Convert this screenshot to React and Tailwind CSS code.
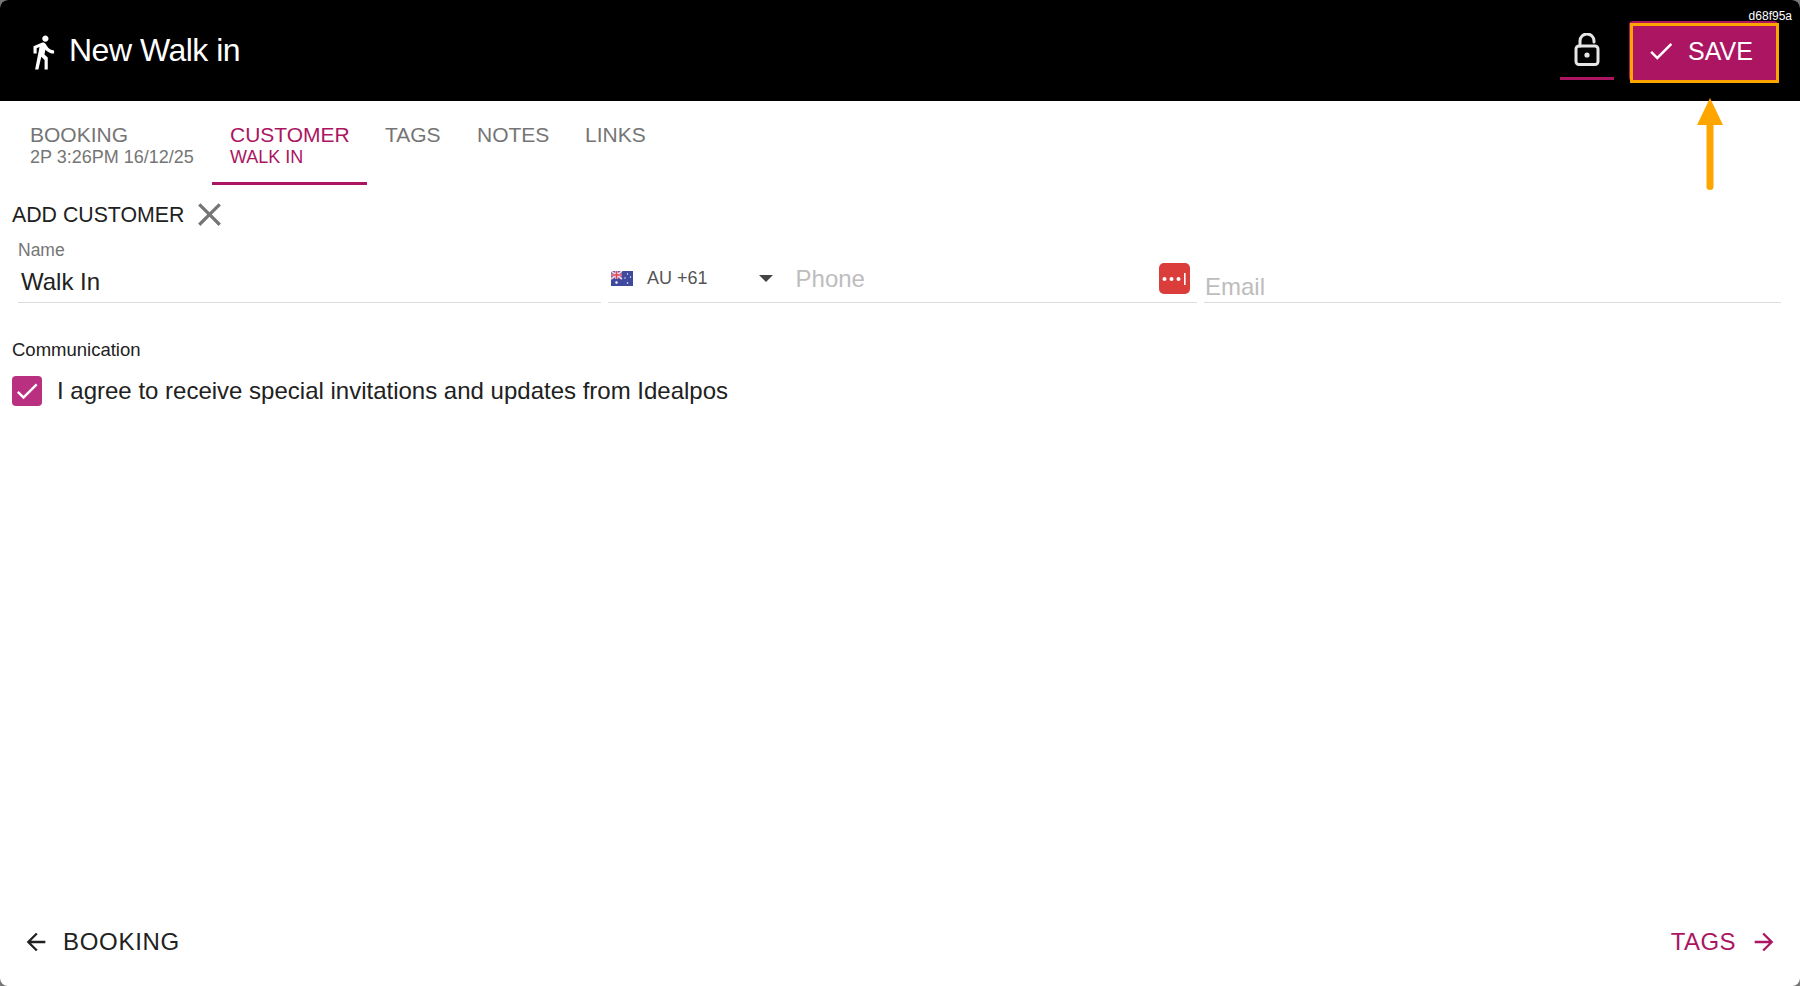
import { MdDirectionsWalk, MdClose, MdCheck, MdArrowBack, MdArrowForward } from "react-icons/md";

const tabs = [
  { label: "BOOKING", sub: "2P 3:26PM 16/12/25", width: "w-[200px]" },
  { label: "CUSTOMER", sub: "WALK IN", active: true, width: "w-[155px]" },
  { label: "TAGS", width: "w-[92px]" },
  { label: "NOTES", width: "w-[108px]" },
  { label: "LINKS", width: "w-[100px]" },
];

function LockOpen() {
  return (
    <svg width="26" height="33" viewBox="0 0 26 33" fill="none" stroke="#e6e6e6" strokeWidth="3">
      <path d="M6 13V8a7 7 0 0 1 14 0v1" strokeLinecap="round" />
      <rect x="2" y="13" width="22" height="18.5" rx="3" />
      <circle cx="13" cy="22" r="2.6" fill="#e6e6e6" stroke="none" />
    </svg>
  );
}

function AuFlag() {
  return (
    <svg width="22" height="15" viewBox="0 0 22 15">
      <rect width="22" height="15" fill="#3f4a9e" />
      <rect width="11" height="8" fill="#56589f" />
      <path d="M0 0l11 8M11 0L0 8" stroke="#f3d5dc" strokeWidth="1.6" />
      <path d="M5.5 0v8M0 4h11" stroke="#f3d5dc" strokeWidth="2.6" />
      <path d="M5.5 0v8M0 4h11" stroke="#e0455f" strokeWidth="1.4" />
      <circle cx="5.5" cy="11.5" r="1.2" fill="#fff" />
      <circle cx="16.5" cy="3" r="0.7" fill="#fff" />
      <circle cx="19.5" cy="6" r="0.7" fill="#fff" />
      <circle cx="14" cy="7" r="0.7" fill="#fff" />
      <circle cx="16.5" cy="12" r="0.8" fill="#fff" />
    </svg>
  );
}

function PasswordIcon() {
  return (
    <div className="w-[31px] h-[31px] rounded-[5px] bg-[#db3d3b] flex items-center justify-center">
      <svg width="27" height="14" viewBox="0 0 27 14" fill="#fff">
        <circle cx="3.5" cy="7" r="2" />
        <circle cx="10.5" cy="7" r="2" />
        <circle cx="17.5" cy="7" r="2" />
        <rect x="23" y="1" width="1.6" height="12" />
      </svg>
    </div>
  );
}

export default function App() {
  return (
    <div className="bg-[#777] h-screen w-full overflow-hidden font-['Liberation_Sans',Arial,sans-serif]">
      <div className="relative bg-white h-full rounded-[8px] overflow-hidden flex flex-col">
        {/* Header */}
        <div className="bg-black h-[101px] shrink-0 flex items-center text-white pl-[24px] pr-[22px]">
          <MdDirectionsWalk className="text-[38px] mt-[2px] text-white" />
          <h1 className="text-[32px] ml-[7px] -mt-[1px] tracking-[-0.5px]">New Walk in</h1>
          <div className="ml-auto self-start flex items-start">
            <div className="w-[54px] h-[60px] mt-[20px] flex items-center justify-center border-b-[3px] border-[#ab1562] mr-[15px] pt-[1px] box-border">
              <LockOpen />
            </div>
            <div className="relative w-[149px] h-[60px] mt-[21px] rounded-[4px] bg-[#ab1562] flex items-center pl-[17px]">
              <MdCheck className="text-[30px]" />
              <span className="text-[25px] ml-[12px] mt-[1px]">SAVE</span>
              <div className="absolute left-[1px] top-[2px] w-[149px] h-[60px] border-[3px] border-[#ffa500]"></div>
            </div>
          </div>
        </div>
        <span className="absolute top-[7px] right-[8px] text-[12px] text-white">d68f95a</span>

        {/* Annotation arrow */}
        <svg className="absolute left-[1696px] top-[98px]" width="28" height="94" viewBox="0 0 28 94" fill="#ffa500">
          <path d="M14 0L27 27H1z" />
          <rect x="10.5" y="24" width="7" height="68" rx="3.5" />
        </svg>

        {/* Tabs */}
        <div className="flex h-[84px] shrink-0 pl-[12px]">
          {tabs.map((t) => (
            <div key={t.label} className={`${t.width} h-[84px] pl-[18px] pt-[22px] ${t.active ? "border-b-[3px] border-[#ab1562] text-[#ab1562]" : "text-[#757575]"}`}>
              <div className="text-[21px] leading-[24px]">{t.label}</div>
              {t.sub && <div className="text-[18px] leading-[20px]">{t.sub}</div>}
            </div>
          ))}
        </div>

        {/* Form */}
        <div className="flex-1 pl-[12px] pr-[19px]">
          <div className="flex items-center mt-[14px] h-[34px]">
            <span className="text-[21.3px] text-[#212121]">ADD CUSTOMER</span>
            <MdClose className="text-[39px] text-[#757575] ml-[6px] -mt-[3px]" />
          </div>
          <div className="flex mt-[7px] h-[63px] gap-[7px] pl-[6px]">
            <div className="w-[583px] border-b border-[#dcdcdc] relative">
              <div className="text-[17.5px] leading-[18px] text-[#757575] pt-[1px]">Name</div>
              <div className="text-[24px] leading-[28px] text-[#212121] pl-[3px] mt-[9px]">Walk In</div>
            </div>
            <div className="w-[589px] border-b border-[#dcdcdc] flex items-start pl-[3px] pt-[24px]">
              <div className="mt-[7px]"><AuFlag /></div>
              <span className="text-[18px] leading-[28px] text-[#555] ml-[14px]">AU +61</span>
              <span className="w-0 h-0 border-x-[7px] border-x-transparent border-t-[7px] border-t-[#444] ml-[51px] mt-[11px]"></span>
              <span className="text-[24px] leading-[28px] text-[#bdbdbd] ml-[23px] mt-[1px]">Phone</span>
              <div className="ml-auto mr-[7px] -mt-[1px]"><PasswordIcon /></div>
            </div>
            <div className="flex-1 border-b border-[#dcdcdc] pt-[33px]">
              <span className="text-[24px] leading-[28px] text-[#bdbdbd] pl-[1px] block">Email</span>
            </div>
          </div>
          <div className="text-[18.5px] leading-[22px] text-[#212121] mt-[36px]">Communication</div>
          <div className="flex items-center mt-[15px]">
            <div className="w-[30px] h-[30px] rounded-[4px] bg-[#b93080] flex items-center justify-center">
              <MdCheck className="text-[28px] text-white" />
            </div>
            <span className="text-[24px] leading-[30px] text-[#212121] ml-[15px]">I agree to receive special invitations and updates from Idealpos</span>
          </div>
        </div>

        {/* Footer nav */}
        <div className="h-[90px] shrink-0 flex items-start justify-between pl-[22px] pr-[22px] pt-[28px]">
          <div className="flex items-center text-[#212121]">
            <MdArrowBack className="text-[28px]" />
            <span className="text-[24px] tracking-[0.7px] ml-[13px]">BOOKING</span>
          </div>
          <div className="flex items-center text-[#ab1562]">
            <span className="text-[24px] tracking-[0.4px]">TAGS</span>
            <MdArrowForward className="text-[28px] ml-[14px]" />
          </div>
        </div>
      </div>
    </div>
  );
}
